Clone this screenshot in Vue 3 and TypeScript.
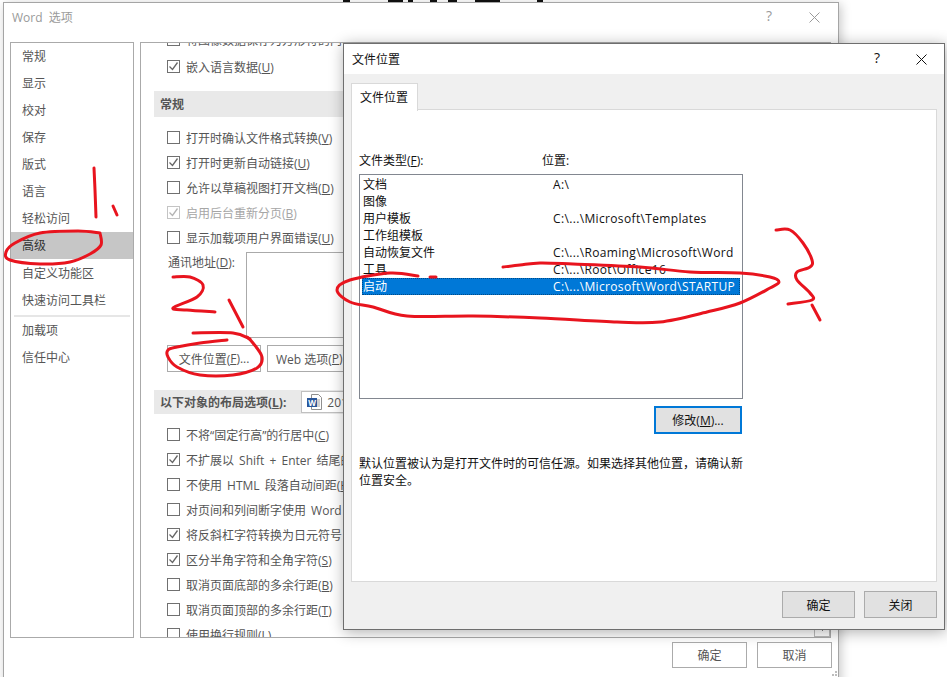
<template>
  <div class="desk">
    <div class="ink-top"></div>

    <!-- Word 选项 -->
    <section class="win win-back">
      <header class="titlebar back-title">
        <span>Word 选项</span>
        <span class="caption-btns">
          <span class="help">?</span>
          <svg width="11" height="11" viewBox="0 0 11 11"><path d="M.5 .5l10 10M10.5 .5l-10 10" stroke="#9a9a9a" fill="none" /></svg>
        </span>
      </header>
      <div class="back-body">
        <nav class="side">
          <template v-for="(group, g) in navGroups" :key="group[0]">
            <div
              v-for="item in group"
              :key="item"
              class="side-item"
              :class="{ 'is-on': item === '高级' }"
            >{{ item }}</div>
            <div v-if="g === 0" class="side-sep"></div>
          </template>
        </nav>
        <main class="opts">
          <div class="opt-row opt-first"><i class="cb"></i><span>将图像数据保存为方形符的内容</span></div>
          <div class="opt-row"><i class="cb is-checked"><svg width="11" height="11" viewBox="0 0 11 11"><path d="M1.5 5.5l3 3 5-7" /></svg></i><span>嵌入语言数据(<u>U</u>)</span></div>
          <div class="section sec-a">常规</div>
          <div
            v-for="o in generalOpts"
            :key="o.text"
            class="opt-row"
            :class="{ 'is-dim': o.dim }"
          >
            <i class="cb" :class="{ 'is-checked': o.on }"><svg v-if="o.on" width="11" height="11" viewBox="0 0 11 11"><path d="M1.5 5.5l3 3 5-7" /></svg></i>
            <span>{{ o.text }}(<u>{{ o.key }}</u>)</span>
          </div>
          <div class="addr">
            <span>通讯地址(<u>D</u>):</span>
            <div class="addr-box"></div>
          </div>
          <div class="addr-btns">
            <button class="btn file-btn">文件位置(<u>F</u>)...</button>
            <button class="btn web-btn">Web 选项(<u>P</u>)...</button>
          </div>
          <div class="section sec-b">
            <b>以下对象的布局选项(<u>L</u>):</b>
            <span class="doc-select">
              <svg width="16" height="16" viewBox="0 0 16 16">
                <path d="M4.5 .5h7l3 3v12h-10z" fill="#fff" stroke="#8f8f8f" />
                <path d="M10 6h3M10 8h3M10 10h3M10 12h3" stroke="#a0a0a0" />
                <rect x="0" y="4" width="10" height="9" fill="#2b579a" />
                <text x="5" y="11.5" class="doc-w">W</text>
              </svg>
              <span>2016</span>
            </span>
          </div>
          <div
            v-for="o in layoutOpts"
            :key="o.text"
            class="opt-row"
          >
            <i class="cb" :class="{ 'is-checked': o.on }"><svg v-if="o.on" width="11" height="11" viewBox="0 0 11 11"><path d="M1.5 5.5l3 3 5-7" /></svg></i>
            <span>{{ o.text }}<template v-if="o.key">(<u>{{ o.key }}</u>)</template></span>
          </div>
          <div class="scroll-down">
            <svg width="9" height="6" viewBox="0 0 9 6"><path d="M1 1l3.5 3.5L8 1" stroke="#555" fill="none" /></svg>
          </div>
        </main>
      </div>
      <footer class="back-foot">
        <button class="btn foot-btn">确定</button>
        <button class="btn foot-btn">取消</button>
      </footer>
      <svg class="grip" width="9" height="8" viewBox="0 0 9 8">
        <path d="M6 0h2v2H6zM3 3h2v2H3zM6 3h2v2H6zM0 6h2v2H0zM3 6h2v2H3zM6 6h2v2H6z" fill="#bdbdbd" />
      </svg>
    </section>

    <!-- 文件位置 -->
    <section class="win win-front">
      <header class="titlebar front-title">
        <span>文件位置</span>
        <span class="caption-btns front-caption">
          <span class="help is-dark">?</span>
          <svg width="11" height="11" viewBox="0 0 11 11"><path d="M.5 .5l10 10M10.5 .5l-10 10" stroke="#111" fill="none" /></svg>
        </span>
      </header>
      <div class="front-body">
        <div class="tabstrip"><div class="tab">文件位置</div></div>
        <div class="tabpage">
          <div class="cols">
            <span class="col-a">文件类型(<u>F</u>):</span>
            <span>位置:</span>
          </div>
          <div class="listbox">
            <div
              v-for="row in fileRows"
              :key="row.name"
              class="list-row"
              :class="{ 'is-sel': row.name === '启动' }"
            >
              <span class="list-name">{{ row.name }}</span>
              <span class="list-path">{{ row.path }}</span>
            </div>
          </div>
          <div class="modify-wrap">
            <button class="btn modify-btn">修改(<u>M</u>)...</button>
          </div>
          <p class="note">默认位置被认为是打开文件时的可信任源。如果选择其他位置，请确认新位置安全。</p>
        </div>
        <div class="front-foot">
          <button class="btn dlg-btn">确定</button>
          <button class="btn dlg-btn">关闭</button>
        </div>
      </div>
    </section>

    <!-- 红笔批注 -->
    <svg class="scribble" width="947" height="677" viewBox="0 0 947 677" fill="none">
      <path v-for="(d, i) in scribbles" :key="i" :d="d" />
    </svg>
  </div>
</template>

<script setup lang="ts">
interface Opt {
  text: string
  key?: string
  on?: boolean
  dim?: boolean
}

type Pt = [number, number]

const navGroups: string[][] = [
  ['常规', '显示', '校对', '保存', '版式', '语言', '轻松访问', '高级', '自定义功能区', '快速访问工具栏'],
  ['加载项', '信任中心'],
]

const generalOpts: Opt[] = [
  { text: '打开时确认文件格式转换', key: 'V' },
  { text: '打开时更新自动链接', key: 'U', on: true },
  { text: '允许以草稿视图打开文档', key: 'D' },
  { text: '启用后台重新分页', key: 'B', on: true, dim: true },
  { text: '显示加载项用户界面错误', key: 'U' },
]

const layoutOpts: Opt[] = [
  { text: '不将“固定行高”的行居中', key: 'C' },
  { text: '不扩展以 Shift + Enter 结尾的行的字符间距', on: true },
  { text: '不使用 HTML 段落自动间距', key: 'H' },
  { text: '对页间和列间断字使用 Word 6.0 规则' },
  { text: '将反斜杠字符转换为日元符号', on: true },
  { text: '区分半角字符和全角字符', key: 'S', on: true },
  { text: '取消页面底部的多余行距', key: 'B' },
  { text: '取消页面顶部的多余行距', key: 'T' },
  { text: '使用换行规则', key: 'L' },
]

const fileRows = [
  { name: '文档', path: 'A:\\' },
  { name: '图像', path: '' },
  { name: '用户模板', path: 'C:\\...\\Microsoft\\Templates' },
  { name: '工作组模板', path: '' },
  { name: '自动恢复文件', path: 'C:\\...\\Roaming\\Microsoft\\Word' },
  { name: '工具', path: 'C:\\...\\Root\\Office16' },
  { name: '启动', path: 'C:\\...\\Microsoft\\Word\\STARTUP' },
]

// catmull-rom through the pen points, good enough for hand-drawn strokes
const smooth = (pts: Pt[]): string => {
  let d = `M${pts[0][0]} ${pts[0][1]}`
  for (let i = 0; i < pts.length - 1; i++) {
    const p0 = pts[Math.max(i - 1, 0)]
    const p1 = pts[i]
    const p2 = pts[i + 1]
    const p3 = pts[Math.min(i + 2, pts.length - 1)]
    const c1x = p1[0] + (p2[0] - p0[0]) / 6
    const c1y = p1[1] + (p2[1] - p0[1]) / 6
    const c2x = p2[0] - (p3[0] - p1[0]) / 6
    const c2y = p2[1] - (p3[1] - p1[1]) / 6
    d += `C${c1x} ${c1y} ${c2x} ${c2y} ${p2[0]} ${p2[1]}`
  }
  return d
}

const scribbles: string[] = ([
  [[94, 168], [95, 190], [96, 217]],
  [[113, 206], [117, 215]],
  [[100, 233], [78, 231], [40, 233], [15, 243], [6, 252], [10, 260], [40, 264], [70, 262], [90, 254], [101, 245], [100, 233]],
  [[173, 277], [190, 277], [203, 285], [197, 297], [173, 308], [187, 310], [215, 312]],
  [[229, 300], [243, 327]],
  [[193, 333], [233, 333], [250, 339]],
  [[227, 340], [200, 343], [177, 347], [168, 350], [168, 357], [177, 367], [200, 375], [233, 375], [257, 368], [262, 357], [253, 343], [247, 337]],
  [[503, 267], [520, 265], [540, 263], [573, 264], [640, 267], [690, 272], [740, 273], [770, 277], [779, 282], [770, 288], [740, 303], [707, 312], [660, 322], [617, 322], [540, 318], [473, 316], [407, 316], [373, 307], [350, 302], [337, 290], [350, 280], [390, 273], [418, 276]],
  [[430, 277], [436, 277]],
  [[776, 230], [790, 230], [803, 243], [812, 260], [810, 267], [797, 272], [797, 280], [810, 293], [812, 300], [788, 304]],
  [[812, 305], [820, 320]],
] as Pt[][]).map(smooth)
</script>

<style>
html, body {
  margin: 0;
  background: #fff;
}
</style>

<style scoped>
.desk {
  position: relative;
  width: 947px;
  height: 677px;
  overflow: hidden;
  background: #fff;
  font-family: "Open Sans", "Noto Sans CJK SC", sans-serif;
  font-size: 12px;
  color: #444;
}

/* 截图顶端露出的一点黑字 */
.ink-top {
  position: absolute;
  left: 340px;
  top: 0;
  width: 206px;
  height: 2px;
  background: linear-gradient(90deg,
    #fff 3px, #111 3px, #111 10px, #fff 10px,
    #fff 48px, #111 48px, #111 63px, #fff 63px,
    #fff 68px, #111 68px, #111 73px, #fff 73px,
    #fff 90px, #111 90px, #111 97px, #fff 97px,
    #fff 108px, #111 108px, #111 117px, #fff 117px,
    #fff 135px, #111 135px, #111 160px, #fff 160px,
    #fff 197px, #111 197px, #111 203px, #fff 203px);
}

.win {
  position: absolute;
  box-sizing: border-box;
  background: #fff;
  border: 1px solid #8a8a8a;
}

.win-back {
  left: 3px;
  top: 2px;
  width: 836px;
  height: 690px;
  border-color: #a5a5a5;
  box-shadow: 2px 2px 10px rgba(0, 0, 0, 0.22);
}

.win-front {
  left: 343px;
  top: 43px;
  width: 602px;
  height: 587px;
  border-color: #6e6e6e;
  box-shadow: 1px 2px 14px rgba(0, 0, 0, 0.32);
  display: flex;
  flex-direction: column;
  color: #111;
}

.titlebar {
  display: flex;
  align-items: center;
  justify-content: space-between;
  flex-shrink: 0;
}

.back-title {
  height: 28px;
  padding: 0 18px 0 8px;
  color: #9a9a9a;
  word-spacing: 3px;
}

.front-title {
  height: 30px;
  padding: 0 17px 0 8px;
  background: #fff;
}

.caption-btns {
  display: flex;
  align-items: center;
  gap: 37px;
}

.front-caption {
  gap: 36px;
}

.help {
  font-size: 14px;
  line-height: 14px;
  margin-top: -2px;
  color: #9a9a9a;
}

.help.is-dark {
  color: #111;
}

.back-body {
  display: flex;
  gap: 6px;
  padding: 11px 7px 0 6px;
  height: 597px;
  box-sizing: content-box;
}

.side {
  width: 124px;
  height: 596px;
  box-sizing: border-box;
  flex-shrink: 0;
  border: 1px solid #aaa;
}

.side-item {
  height: 27px;
  line-height: 27px;
  padding-left: 11px;
  color: #555;
}

.side-item.is-on {
  background: #c6c6c6;
  color: #333;
  margin-bottom: 1px;
}

.side-sep {
  height: 2px;
  margin: 1px 3px 0;
  background: #e6e6e6;
}

.opts {
  position: relative;
  flex: 1;
  height: 596px;
  box-sizing: border-box;
  border: 1px solid #aaa;
  padding: 0 0 0 13px;
  overflow: hidden;
}

.opt-row {
  display: flex;
  align-items: center;
  gap: 6px;
  height: 25px;
  padding-left: 13px;
  color: #555;
  white-space: nowrap;
  word-spacing: 2px;
}

.opt-first {
  margin-top: -16px;
  margin-bottom: 2px;
}

.opt-row.is-dim {
  color: #a6a6a6;
}

.cb {
  box-sizing: border-box;
  width: 13px;
  height: 13px;
  flex-shrink: 0;
  border: 1px solid #707070;
  background: #fff;
  display: flex;
  align-items: center;
  justify-content: center;
}

.cb svg path {
  fill: none;
  stroke: #666;
  stroke-width: 1.3;
}

.is-dim .cb {
  border-color: #c4c4c4;
}

.is-dim .cb svg path {
  stroke: #b4b4b4;
}

.section {
  display: flex;
  align-items: center;
  background: #e9e9e9;
  padding-left: 6px;
  color: #555;
  font-weight: 700;
}

.sec-a {
  height: 26px;
  margin: 12px 0 8px;
}

.sec-b {
  height: 24px;
  margin: 18px 0 8px;
  gap: 15px;
}

.sec-b b {
  font-weight: 700;
}

.doc-select {
  display: flex;
  align-items: center;
  gap: 4px;
  box-sizing: border-box;
  height: 22px;
  width: 120px;
  padding-left: 5px;
  background: #fff;
  border: 1px solid #c0c0c0;
  font-weight: 400;
}

.doc-w {
  font-size: 8px;
  font-weight: 700;
  fill: #fff;
  text-anchor: middle;
}

.addr {
  display: flex;
  gap: 11px;
  height: 87px;
  padding-left: 14px;
  color: #555;
  margin-top: 1px;
}

.addr > span {
  padding-top: 3px;
  line-height: 18px;
}

.addr-box {
  box-sizing: border-box;
  width: 200px;
  height: 86px;
  margin-top: 1px;
  border: 1px solid #aaa;
  background: #fff;
}

.addr-btns {
  display: flex;
  gap: 6px;
  padding-left: 13px;
  margin-top: 7px;
}

.btn {
  box-sizing: border-box;
  display: inline-flex;
  align-items: center;
  justify-content: center;
  padding: 0;
  font: inherit;
  color: #555;
  background: #fff;
  border: 1px solid #ababab;
  white-space: nowrap;
}

.file-btn,
.web-btn {
  width: 94px;
  height: 27px;
}

.scroll-down {
  position: absolute;
  right: 0;
  bottom: 0;
  width: 16px;
  height: 17px;
  box-sizing: border-box;
  border: 1px solid #bbb;
  display: flex;
  align-items: center;
  justify-content: center;
}

.back-foot {
  display: flex;
  justify-content: flex-end;
  gap: 10px;
  padding: 3px 6px 0 0;
}

.foot-btn {
  width: 75px;
  height: 26px;
}

.grip {
  position: absolute;
  left: 825px;
  top: 668px;
}

.front-body {
  flex: 1;
  display: flex;
  flex-direction: column;
  background: #f0f0f0;
  padding: 9px 7px 0 7px;
  min-height: 0;
}

.tabstrip {
  display: flex;
  height: 27px;
  flex-shrink: 0;
  margin-bottom: -1px;
}

.tab {
  box-sizing: border-box;
  width: 67px;
  height: 28px;
  background: #fff;
  border: 1px solid #d9d9d9;
  border-bottom: none;
  padding: 4px 0 0 8px;
  position: relative;
  z-index: 1;
}

.tabpage {
  box-sizing: border-box;
  height: 473px;
  flex-shrink: 0;
  background: #fff;
  border: 1px solid #d9d9d9;
  padding: 40px 0 0 7px;
}

.cols {
  display: flex;
  height: 20px;
  align-items: center;
}

.col-a {
  width: 183px;
}

.listbox {
  box-sizing: border-box;
  width: 384px;
  height: 225px;
  margin-top: 4px;
  padding: 1px 2px 0;
  border: 1px solid #828790;
  background: #fff;
}

.list-row {
  display: flex;
  height: 17px;
  line-height: 17px;
  padding-left: 1px;
  white-space: nowrap;
}

.list-path {
  letter-spacing: 0.35px;
}

.list-row.is-sel {
  background: #0078d7;
  color: #fff;
  outline: 1px dotted #004a86;
  outline-offset: -1px;
}

.list-name {
  width: 190px;
}

.modify-wrap {
  width: 383px;
  display: flex;
  justify-content: flex-end;
  margin-top: 7px;
}

.modify-btn {
  width: 88px;
  height: 28px;
  background: #e1e1e1;
  border: 2px solid #0078d7;
  color: #111;
}

.note {
  width: 386px;
  margin: 21px 0 0;
  line-height: 17px;
}

.front-foot {
  display: flex;
  justify-content: flex-end;
  gap: 9px;
  padding-top: 9px;
}

.dlg-btn {
  width: 73px;
  height: 27px;
  background: #e1e1e1;
  color: #111;
}

.scribble {
  position: absolute;
  left: 0;
  top: 0;
  pointer-events: none;
}

.scribble path {
  stroke: #e8141e;
  stroke-width: 3;
  stroke-linecap: round;
  stroke-linejoin: round;
}
</style>
